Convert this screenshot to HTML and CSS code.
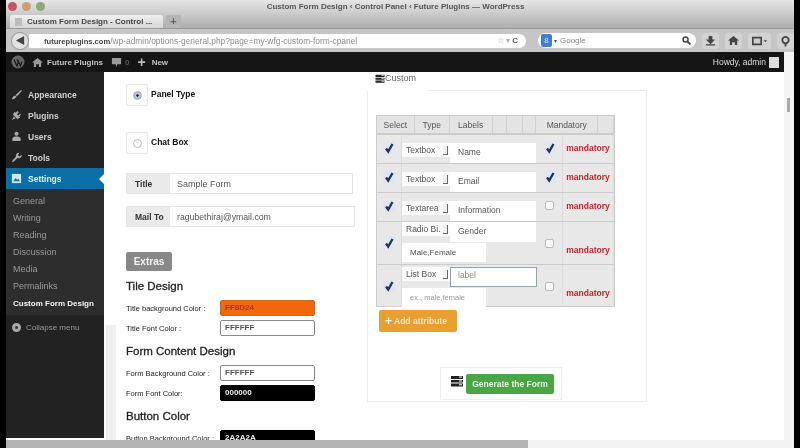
FILE: index.html
```html
<!DOCTYPE html>
<html lang="en">
<head>
<meta charset="utf-8">
<title>Custom Form Design</title>
<link rel="stylesheet" href="styles.css">
</head>
<body>
<svg class="defs" width="0" height="0">
  <symbol id="chk" viewBox="0 0 12 12"><path d="M3 6.500 5.200 9.500 9.500 2" fill="none" stroke="#26345e" stroke-width="2.400"/></symbol>
  <symbol id="server" viewBox="0 0 12 12"><path d="M0 1h12v3H0zM0 5h12v2.500H0zM0 8.500h12V11.500H0z" fill="#222"/><path d="M8 2h3M8 6h3M8 9.800h3" stroke="#fff" stroke-width="1"/></symbol>
</svg>
<div class="screen">
  <header class="chrome">
    <div class="titlebar">
      <div class="lights"><i class="light red"></i><i class="light amber"></i><i class="light green"></i></div>
      <div class="wintitle">Custom Form Design ‹ Control Panel ‹ Future Plugins — WordPress</div>
    </div>
    <div class="tabstrip">
      <div class="tab"><i class="favicon"></i><span>Custom Form Design - Control ...</span></div>
      <div class="newtab">+</div>
    </div>
    <div class="toolbar">
      <div class="back"><svg width="9" height="9" viewBox="0 0 10 10"><path d="M9 0v10L0 5z" fill="#444"/></svg></div>
      <div class="urlbar">
        <span class="url"><b>futureplugins.com</b>/wp-admin/options-general.php?page=my-wfg-custom-form-cpanel</span>
        <span class="urlicons">☆ ▾ <b>C</b></span>
      </div>
      <div class="search"><i class="engine">8</i><span class="caret">▾</span><span class="query">Google</span><svg class="glass" width="9" height="9" viewBox="0 0 9 9"><circle cx="3.500" cy="3.500" r="2.500" fill="none" stroke="#444" stroke-width="1.500"/><path d="M5.500 5.500 8.500 8.500" stroke="#444" stroke-width="1.800"/></svg></div>
      <div class="tools">
        <span class="tool"><svg width="11" height="11" viewBox="0 0 12 12"><path d="M4 1h4v4h3L6 10 1 5h3zM1 10h10v1.500H1z" fill="#444"/></svg></span>
        <span class="tool"><svg width="11" height="11" viewBox="0 0 12 12"><path d="M6 1 12 6h-2v5H7.500V8h-3v3H2V6H0z" fill="#444"/></svg></span>
        <span class="tool wide"><svg width="17" height="10" viewBox="0 0 18 12"><path d="M1 2h10v8H1z" fill="#ccc" stroke="#444" stroke-width="2"/><path d="M14 5h4l-2 2.500z" fill="#444"/></svg></span>
        <span class="tool"><svg width="11" height="12" viewBox="0 0 12 12"><circle cx="6" cy="5" r="3.500" fill="none" stroke="#444" stroke-width="2"/><path d="M6 9v3" stroke="#444" stroke-width="2"/></svg></span>
      </div>
    </div>
  </header>

  <div class="wp">
    <div class="adminbar">
      <svg class="wplogo" width="14" height="14" viewBox="0 0 14 14"><circle cx="7" cy="7" r="6.500" fill="#666"/><path d="M3 4.500 6 11 7.300 7 6 4.500M6.500 4.500 9.500 11 11 6.500" fill="none" stroke="#1a1a1a" stroke-width="1.200"/></svg>
      <svg class="baricon" width="11" height="11" viewBox="0 0 12 12"><path d="M6 1 12 6h-2v5H7.500V8h-3v3H2V6H0z" fill="#999"/></svg>
      <span class="sitename">Future Plugins</span>
      <svg class="comment" width="11" height="11" viewBox="0 0 12 12"><path d="M1 1h10v7H7l-1 3-1-3H1z" fill="#999"/></svg>
      <span class="count">0</span>
      <span class="plus">+</span>
      <span class="newlink">New</span>
      <span class="howdy">Howdy, admin</span>
      <i class="avatar"></i>
    </div>

    <nav class="sidebar">
      <ul class="menu">
        <li class="item"><svg class="mi" viewBox="0 0 12 12"><path d="M11 1 5 6.500 6.500 8 12 2zM4.500 7 2 8.500 1 11.500 4 10.500 6 8.500z" fill="#aaa"/></svg>Appearance</li>
        <li class="item"><svg class="mi" viewBox="0 0 12 12"><path d="M7 1 5 3 4 2 2 5 7 10 10 8 9 7 11 5 10 4 8 6 6.500 4.500 8.500 2.500zM3 7 1 11l4-2z" fill="#aaa"/></svg>Plugins</li>
        <li class="item"><svg class="mi" viewBox="0 0 12 12"><circle cx="6" cy="3" r="2.200" fill="#aaa"/><path d="M1.500 11V7.500L4 6h4l2.500 1.500V11z" fill="#aaa"/></svg>Users</li>
        <li class="item"><svg class="mi" viewBox="0 0 12 12"><path d="M11.500 3 9.500 5 7.500 3.500 9 1a3 3 0 0 0-3.500 4L1 10l1.200 1.200 5-4.700a3 3 0 0 0 4.300-3.500z" fill="#aaa"/></svg>Tools</li>
        <li class="item current"><svg class="mi" viewBox="0 0 12 12"><path d="M1 1h10v10H1z" fill="#d6e6f0"/><path d="M2.500 9 5 5.500 6.800 7.500 8 6 9.500 9z" fill="#0c6ea6"/></svg>Settings</li>
      </ul>
      <ul class="submenu">
        <li>General</li>
        <li>Writing</li>
        <li>Reading</li>
        <li>Discussion</li>
        <li>Media</li>
        <li>Permalinks</li>
        <li class="active">Custom Form Design</li>
      </ul>
      <div class="collapse"><i class="collapse-ico"></i>Collapse menu</div>
    </nav>

    <main class="content">
      <i class="inner-scroll"></i>
      <section class="left">
        <div class="radio-row"><span class="radio-box"><i class="radio on"></i></span><b>Panel Type</b></div>
        <div class="radio-row second"><span class="radio-box"><i class="radio"></i></span><b>Chat Box</b></div>
        <div class="group first-group"><span class="addon">Title</span><span class="gfield">Sample Form</span></div>
        <div class="group mail"><span class="addon">Mail To</span><span class="gfield small">ragubethiraj@ymail.com</span></div>
        <div class="extras">Extras</div>
        <h3>Tile Design</h3>
        <div class="color"><label>Title background Color :</label><span class="swatch orange">FF8D24</span></div>
        <div class="color"><label>Title Font Color :</label><span class="swatch">FFFFFF</span></div>
        <h3>Form Content Design</h3>
        <div class="color"><label>Form Background Color :</label><span class="swatch">FFFFFF</span></div>
        <div class="color"><label>Form Font Color:</label><span class="swatch black">000000</span></div>
        <h3>Button Color</h3>
        <div class="color"><label>Button Background Color :</label><span class="swatch black">2A2A2A</span></div>
      </section>

      <section class="right">
        <div class="tab-head"><span class="form-tab"><svg class="srv" width="10" height="9"><use href="#server"/></svg>Custom</span></div>
        <div class="panel">
          <div class="builder">
            <div class="thead">
              <span class="th w38">Select</span><span class="th w35">Type</span><span class="th w43">Labels</span><span class="th w15"></span><span class="th w16"></span><span class="th w13"></span><span class="th w62">Mandatory</span><span class="th w16"></span>
            </div>
            <div class="row">
              <span class="cell chk"><svg class="check"><use href="#chk"/></svg></span>
              <div class="fields"><div class="line"><span class="sel">Textbox<i class="arrow"></i></span><span class="inp">Name</span></div></div>
              <span class="cell chk"><svg class="check"><use href="#chk"/></svg></span>
              <span class="cell req">mandatory</span>
            </div>
            <div class="row">
              <span class="cell chk"><svg class="check"><use href="#chk"/></svg></span>
              <div class="fields"><div class="line"><span class="sel">Textbox<i class="arrow"></i></span><span class="inp">Email</span></div></div>
              <span class="cell chk"><svg class="check"><use href="#chk"/></svg></span>
              <span class="cell req">mandatory</span>
            </div>
            <div class="row">
              <span class="cell chk"><svg class="check"><use href="#chk"/></svg></span>
              <div class="fields"><div class="line"><span class="sel">Textarea<i class="arrow"></i></span><span class="inp">Information</span></div></div>
              <span class="cell chk"><i class="empty"></i></span>
              <span class="cell req">mandatory</span>
            </div>
            <div class="row tall">
              <span class="cell chk"><svg class="check"><use href="#chk"/></svg></span>
              <div class="fields"><div class="line"><span class="sel">Radio Bi.<i class="arrow"></i></span><span class="inp">Gender</span></div><span class="extra">Male,Female</span></div>
              <span class="cell chk"><i class="empty"></i></span>
              <span class="cell req low">mandatory</span>
            </div>
            <div class="row tall last">
              <span class="cell chk"><svg class="check"><use href="#chk"/></svg></span>
              <div class="fields"><div class="line"><span class="sel">List Box<i class="arrow"></i></span><span class="inp focus">label</span></div><span class="extra ph">ex., male,female</span></div>
              <span class="cell chk"><i class="empty"></i></span>
              <span class="cell req low">mandatory</span>
            </div>
          </div>
          <div class="add"><span class="add-plus">+</span>Add attribute</div>
          <div class="generate"><svg class="gen-ico" width="12" height="12"><use href="#server"/></svg><span class="gen-btn">Generate the Form</span></div>
        </div>
      </section>
    </main>

    <aside class="vscroll"><i class="vthumb"></i></aside>
  </div>

  <div class="hscroll"><i class="hthumb"></i></div>
</div>
</body>
</html>
```
FILE: styles.css
```css
* { box-sizing: border-box; }
html, body { margin: 0; height: 448px; overflow: hidden; background: #000; }
body { font-family: "Liberation Sans", Arial, sans-serif; color: #333; }
ul { list-style: none; margin: 0; padding: 0; }
.defs { display: block; height: 0; }
.screen { width: 788px; height: 448px; margin: 0 6px; display: flex; flex-direction: column; background: #fff; overflow: hidden; filter: blur(0.6px); }

/* browser chrome */
.chrome { height: 52px; flex: none; display: flex; flex-direction: column; background: linear-gradient(#e6e6e6, #b2b2b2 50%, #9e9e9e); }
.titlebar { height: 15px; display: flex; align-items: flex-start; padding-top: 2px; position: relative; }
.lights { display: flex; gap: 5px; padding-left: 2px; }
.light { width: 9px; height: 9px; border-radius: 50%; }
.red { background: #c2555d; }
.amber { background: #c9a26a; }
.green { background: #8fa878; }
.wintitle { flex: 1; text-align: center; font-size: 8px; font-weight: bold; color: #555; padding-right: 14px; white-space: nowrap; margin-left: -34px; }
.tabstrip { height: 13px; display: flex; align-items: flex-end; gap: 3px; padding-left: 4px; }
.tab { width: 153px; height: 13px; background: linear-gradient(#f0f0f0, #d5d5d5); border-radius: 2px 2px 0 0; display: flex; align-items: center; gap: 5px; padding-left: 5px; font-size: 8px; font-weight: bold; color: #444; white-space: nowrap; }
.favicon { width: 7px; height: 8px; background: #bbb; }
.newtab { width: 15px; height: 13px; background: #b5b5b5; color: #666; text-align: center; font-size: 11px; line-height: 12px; font-weight: bold; }
.toolbar { height: 24px; display: flex; align-items: center; background: #c6c6c6; border-top: 1px solid #999; padding-left: 5px; }
.back { width: 18px; height: 18px; border-radius: 50%; background: #e2e2e2; border: 1px solid #999; display: flex; align-items: center; justify-content: center; flex: none; }
.urlbar { width: 500px; height: 14px; background: #fff; display: flex; align-items: center; justify-content: space-between; padding: 0 8px 0 15px; font-size: 8.4px; color: #8c8c8c; white-space: nowrap; border-radius: 0 7px 7px 0; }
.url b { color: #444; font-size: 7.6px; }
.urlicons { color: #aaa; font-size: 8px; }
.urlicons b { color: #555; }
.search { width: 158px; height: 15px; margin-left: 12px; background: #fff; border-radius: 8px; display: flex; align-items: center; font-size: 8px; color: #888; flex: none; }
.engine { width: 11px; height: 13px; background: #3f7fd0; color: #cfe0f5; font-style: normal; font-size: 8px; text-align: center; line-height: 13px; margin-left: 3px; border-radius: 2px; }
.caret { font-size: 6px; color: #555; margin: 0 3px 0 2px; }
.query { flex: 1; }
.glass { margin-right: 5px; }
.tools { display: flex; gap: 6px; margin-left: 6px; }
.tool { width: 17px; height: 16px; background: #d2d2d2; border-radius: 3px; display: flex; align-items: center; justify-content: center; flex: none; }
.tool.wide { width: 23px; }

/* wordpress */
.wp { flex: 1; min-height: 0; display: grid; grid-template-columns: 98px 680px 10px; grid-template-rows: 20px 1fr; background: #fff; }
.adminbar { grid-column: 1 / 3; background: #151515; display: flex; align-items: center; color: #c4c4c4; font-size: 8px; font-weight: bold; white-space: nowrap; }
.wplogo { margin-left: 5px; }
.baricon { margin-left: 7px; }
.sitename { margin-left: 4px; }
.comment { margin-left: 8px; }
.count { margin-left: 3px; color: #555; }
.plus { margin-left: 8px; font-size: 14px; line-height: 14px; color: #bbb; }
.newlink { margin-left: 6px; }
.howdy { margin-left: auto; font-weight: normal; font-size: 8.5px; color: #ddd; }
.avatar { width: 10px; height: 11px; background: #ddd; margin: 0 5px 0 3px; }

.sidebar { background: #222; margin-bottom: 2px; color: #bbb; font-size: 8.5px; }
.menu { padding-top: 12px; }
.item { height: 21px; display: flex; align-items: center; padding-left: 5px; color: #d0d0d0; font-weight: bold; white-space: nowrap; }
.mi { width: 11px; height: 11px; margin-right: 6px; flex: none; }
.current { background: #0c6ea6; color: #e6f0f6; position: relative; }
.current::after { content: ""; position: absolute; right: 0; top: 6px; border: 5px solid transparent; border-right-color: #fff; border-left-width: 0; }
.submenu { background: #2d2d2d; padding: 4px 0 3px; }
.submenu li { height: 17px; line-height: 17px; padding-left: 7px; color: #999; font-size: 9px; white-space: nowrap; }
.submenu .active { color: #f6f6f6; font-weight: bold; font-size: 8px; }
.collapse { display: flex; align-items: center; gap: 5px; padding: 8px 0 0 6px; color: #999; font-size: 8px; white-space: nowrap; }
.collapse-ico { width: 9px; height: 9px; border-radius: 50%; border: 3px solid #aaa; background: #333; }

.content { position: relative; display: flex; overflow: hidden; }
.inner-scroll { position: absolute; left: 2px; top: 253px; width: 10px; height: 120px; background: #f0f0f0; }
.left { width: 262px; flex: none; padding: 12px 0 0 22px; }
.radio-row { display: flex; align-items: flex-start; height: 22px; font-size: 8.5px; color: #111; }
.radio-row b { margin: 5px 0 0 3px; }
.radio-row.second { margin-top: 26px; }
.radio-box { width: 22px; height: 22px; border: 1px solid #e8e8e8; border-radius: 2px; display: flex; align-items: center; justify-content: center; }
.radio { width: 9px; height: 9px; border-radius: 50%; background: #fff; border: 1px solid #bbb; }
.radio.on { background: radial-gradient(#222 18%, #b7c1d8 30%); border-color: #aab; }
.group { display: flex; height: 21px; border: 1px solid #e4e4e4; font-size: 9px; color: #555; width: 227px; }
.first-group { margin-top: 19px; }
.mail { width: 229px; margin-top: 12px; }
.addon { width: 43px; background: #eaeaea; font-size: 8.5px; font-weight: bold; color: #333; display: flex; align-items: center; padding-left: 8px; flex: none; white-space: nowrap; }
.gfield { padding-left: 7px; display: flex; align-items: center; white-space: nowrap; }
.gfield.small { font-size: 8.7px; }
.extras { width: 46px; height: 19px; margin: 25px 0 1px; background: #888; border-radius: 2px; color: #f2f2f2; font-weight: bold; font-size: 10px; display: flex; align-items: center; justify-content: center; }
h3 { font-size: 11.5px; font-weight: normal; color: #222; margin: 9px 0 7px; height: 13px; line-height: 13px; white-space: nowrap; -webkit-text-stroke: 0.3px #222; }
.color { display: flex; align-items: center; height: 16px; margin-bottom: 4px; font-size: 7.5px; color: #222; }
.color label { width: 94px; flex: none; white-space: nowrap; }
.swatch { width: 95px; height: 16px; border: 1px solid #888; border-radius: 2px; padding-left: 4px; line-height: 14px; font-size: 8px; font-weight: bold; color: #555; background: #fff; }
.orange { background: #f2670c; color: #a43d00; border-color: #c86a20; }
.black { background: #000; color: #eee; border-color: #000; }

.right { flex: 1; padding-left: 1px; }
.tab-head { height: 18px; }
.form-tab { display: flex; align-items: center; width: 60px; height: 19px; font-size: 9px; color: #666; padding: 0 0 7px 8px; white-space: nowrap; background: #fff; position: relative; z-index: 1; }
.srv { flex: none; }
.panel { width: 280px; height: 312px; border: 1px solid #eee; padding: 24px 0 0 8px; position: relative; }
.builder { width: 239px; border: 1px solid #ccc; background: #e8e8e8; font-size: 8.5px; color: #555; }
.thead { display: flex; height: 19px; background: #e4e4e4; border-bottom: 2px solid #ccc; }
.th { display: flex; align-items: center; justify-content: center; border-right: 1px solid #d2d2d2; font-size: 8.5px; white-space: nowrap; }
.w38 { width: 38px; }
.w35 { width: 35px; }
.w43 { width: 43px; }
.w15 { width: 15px; }
.w16 { width: 16px; }
.w13 { width: 13px; }
.w62 { width: 62px; }
.row { display: grid; grid-template-columns: 25px 135px 26px 51px; height: 29px; border-bottom: 1px solid #ccc; }
.row.tall { height: 43px; }
.row.last { height: 41px; border-bottom: 0; }
.cell { display: flex; align-items: center; justify-content: center; border-right: 1px solid #ddd; }
.check { width: 12px; height: 12px; margin-bottom: 3px; background: #dfe7f3; border-radius: 2px; }
.empty { width: 9px; height: 9px; border: 1px solid #bbb; background: #f8f8f8; border-radius: 2px; margin-bottom: 3px; }
.tall .check, .tall .empty { margin-bottom: 0; }
.req { color: #c2252d; font-size: 8.5px; font-weight: bold; padding-bottom: 3px; }
.req.low { padding: 14px 0 0; }
.fields { display: flex; flex-direction: column; padding-top: 8px; }
.tall .fields { padding-top: 0; }
.last .fields { padding-top: 2px; }
.line { display: flex; }
.sel { width: 48px; height: 14px; background: #fbfbfb; display: flex; align-items: center; padding: 0 0 1px 4px; position: relative; white-space: nowrap; overflow: hidden; }
.arrow { position: absolute; right: 2px; top: 3px; width: 5px; height: 9px; background: #f0f0f0; border: 1px solid #666; border-width: 0 1px 1px 0; }
.inp { width: 86px; height: 20px; background: #fff; padding: 2px 0 0 8px; line-height: 14px; color: #555; }
.inp.focus { border: 1px solid #8fa3b8; width: 87px; padding: 0 0 0 7px; color: #888; }
.extra { width: 84px; height: 19px; background: #fff; padding-left: 8px; line-height: 19px; white-space: nowrap; font-size: 8px; margin-top: 1px; }
.ph { color: #999; font-size: 7.5px; }
.add { width: 78px; height: 22px; margin: 3px 0 0 3px; background: #eaa030; border-radius: 2px; color: #fbe7bf; font-size: 8.5px; font-weight: bold; display: flex; align-items: center; padding-left: 6px; white-space: nowrap; }
.add-plus { font-size: 12px; margin-right: 2px; color: #fff; }
.generate { position: absolute; left: 72px; top: 276px; width: 122px; height: 33px; background: #fff; border: 1px solid #eee; display: flex; align-items: center; padding-left: 10px; gap: 3px; }
.gen-ico { flex: none; margin-bottom: 6px; }
.gen-btn { width: 88px; height: 20px; background: #4aa544; border-radius: 2px; color: #e8f5e6; font-size: 8.5px; font-weight: bold; display: flex; align-items: center; justify-content: center; white-space: nowrap; }

.vscroll { grid-column: 3; grid-row: 1 / 3; background: #f4f4f4; padding: 46px 0 0 3px; }
.vthumb { display: block; width: 3px; height: 14px; background: #aaa; }
.hscroll { height: 8px; flex: none; background: #f3f3f3; }
.hthumb { display: block; width: 522px; height: 8px; background: #b4b4b4; }
```
